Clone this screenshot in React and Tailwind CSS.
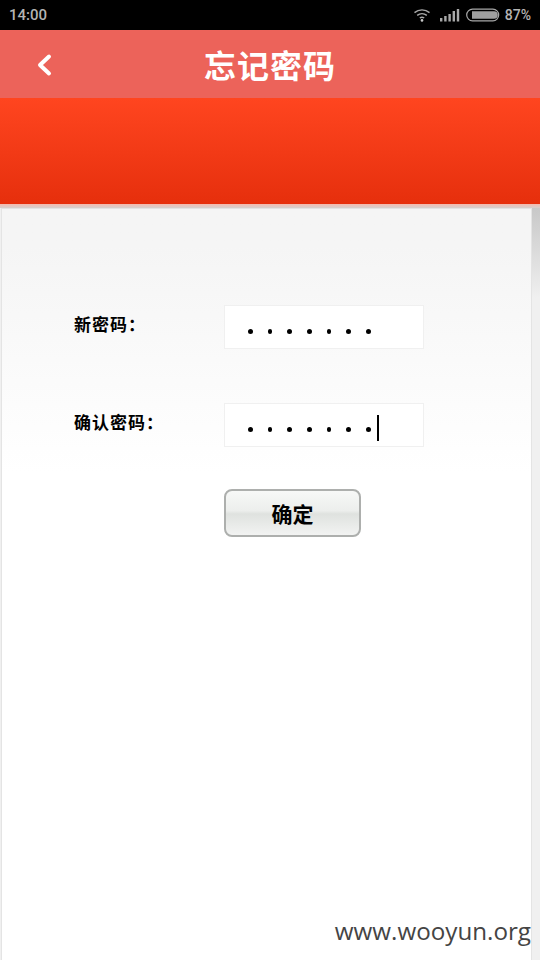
const FONT = '"Noto Sans CJK SC","Noto Sans",sans-serif';

function Wifi() {
  return (
    <svg width="18" height="14" viewBox="0 0 18 14" fill="none" stroke="#a8a8a8" strokeWidth="1.4">
      <path d="M1.5 4.6C5.8 1 12.2 1 16.5 4.6" />
      <path d="M4.2 7.4C7 5.2 11 5.2 13.8 7.4" />
      <path d="M6.8 10C8 9.1 10 9.1 11.2 10" />
      <circle cx="9" cy="12.4" r="1.3" fill="#c8c8c8" stroke="none" />
    </svg>
  );
}

function Signal() {
  return (
    <svg width="20" height="14" viewBox="0 0 20 14" fill="#a8a8a8">
      <rect x="0" y="10" width="2.4" height="3.5" />
      <rect x="4.2" y="8" width="2.4" height="5.5" />
      <rect x="8.4" y="6" width="2.4" height="7.5" />
      <rect x="12.6" y="3" width="2.4" height="10.5" />
      <rect x="16.8" y="1" width="2.4" height="12.5" />
    </svg>
  );
}

function Battery() {
  return (
    <svg width="34" height="14" viewBox="0 0 34 14" fill="none">
      <rect x="0.7" y="1.2" width="32" height="11.6" rx="5.8" stroke="#a8a8a8" strokeWidth="1.2" />
      <path d="M6 3.2H28a3.8 3.8 0 0 1 0 7.6H6Z" fill="#a0a0a0" />
    </svg>
  );
}

function Dots({ caret }) {
  return (
    <div className="relative h-full pl-[23px] pt-[23px] flex gap-[15.2px] items-start">
      {[0, 1, 2, 3, 4, 5, 6].map((i) => (
        <span key={i} className="block w-[4.5px] h-[4.5px] rounded-full bg-black" />
      ))}
      {caret && <span className="absolute left-[152px] top-[11px] w-[1.5px] h-[26px] bg-black" />}
    </div>
  );
}

function Row({ label, caret, className = "" }) {
  return (
    <div className={`flex items-start ${className}`}>
      <div className="w-[222px] pl-[72px] shrink-0 whitespace-nowrap text-[17px] leading-[24px] font-bold tracking-[1px] text-black pt-[7px]">
        {label}
      </div>
      <div className="w-[200px] h-[44px] bg-white border border-[#f0f0f0]">
        <Dots caret={caret} />
      </div>
    </div>
  );
}

export default function App() {
  return (
    <div className="relative w-[540px] h-[960px] overflow-hidden flex flex-col bg-white" style={{ fontFamily: FONT }}>
      <div className="h-[30px] bg-black flex items-center justify-between pl-[9px] pr-[9px] shrink-0">
        <span className="text-[15px] font-medium text-[#b4b4b4] leading-none" style={{ fontFamily: '"Roboto",sans-serif' }}>14:00</span>
        <div className="flex items-center">
          <Wifi />
          <div className="w-[9px]" />
          <Signal />
          <div className="w-[6px]" />
          <Battery />
          <span className="ml-[5px] text-[14px] font-medium text-[#b4b4b4] leading-none" style={{ fontFamily: '"Roboto",sans-serif' }}>87%</span>
        </div>
      </div>

      <div className="relative h-[68px] bg-[#ec635a] flex items-center justify-center shrink-0">
        <svg className="absolute left-[36px] top-[23px]" width="16" height="24" viewBox="0 0 16 24" fill="none" stroke="#fff" strokeWidth="4" strokeLinecap="round" strokeLinejoin="round">
          <path d="M13 3.5 4 12l9 8.5" />
        </svg>
        <span className="text-[32px] font-bold text-white leading-none tracking-[1px]">忘记密码</span>
      </div>

      <div className="h-[106px] bg-gradient-to-b from-[#ff451f] to-[#e62f0c] shrink-0" />
      <div className="h-[4px] bg-gradient-to-b from-[#f4b9ae] to-[#d5d0ce] shrink-0" />

      <div className="flex-1 flex min-h-0 bg-[#f0f0f0]">
        <div className="ml-px w-[531px] shrink-0 border-t border-l border-r border-[#e4e4e4] bg-gradient-to-b from-[#f5f5f5] from-[5%] to-white to-[35%] pt-[96px]">
          <Row label="新密码：" />
          <Row label="确认密码：" caret className="mt-[54px]" />
          <div className="pl-[222px] mt-[42px]">
            <button className="w-[137px] h-[48px] rounded-[8px] border-2 border-[#adafad] bg-[linear-gradient(#f7f8f7_0%,#eceeec_45%,#dfe2df_52%,#f2f3f2_100%)] text-[21px] font-bold text-black leading-none">
              确定
            </button>
          </div>
        </div>
        <div className="flex-1 bg-gradient-to-b from-[#c8c8c8] to-[#f0f0f0] to-[12%]" />
      </div>

      <div className="absolute right-[9px] top-[916px] text-[24.2px] leading-[30px] text-[#444]" style={{ fontFamily: '"Open Sans",sans-serif' }}>
        www.wooyun.org
      </div>
    </div>
  );
}
